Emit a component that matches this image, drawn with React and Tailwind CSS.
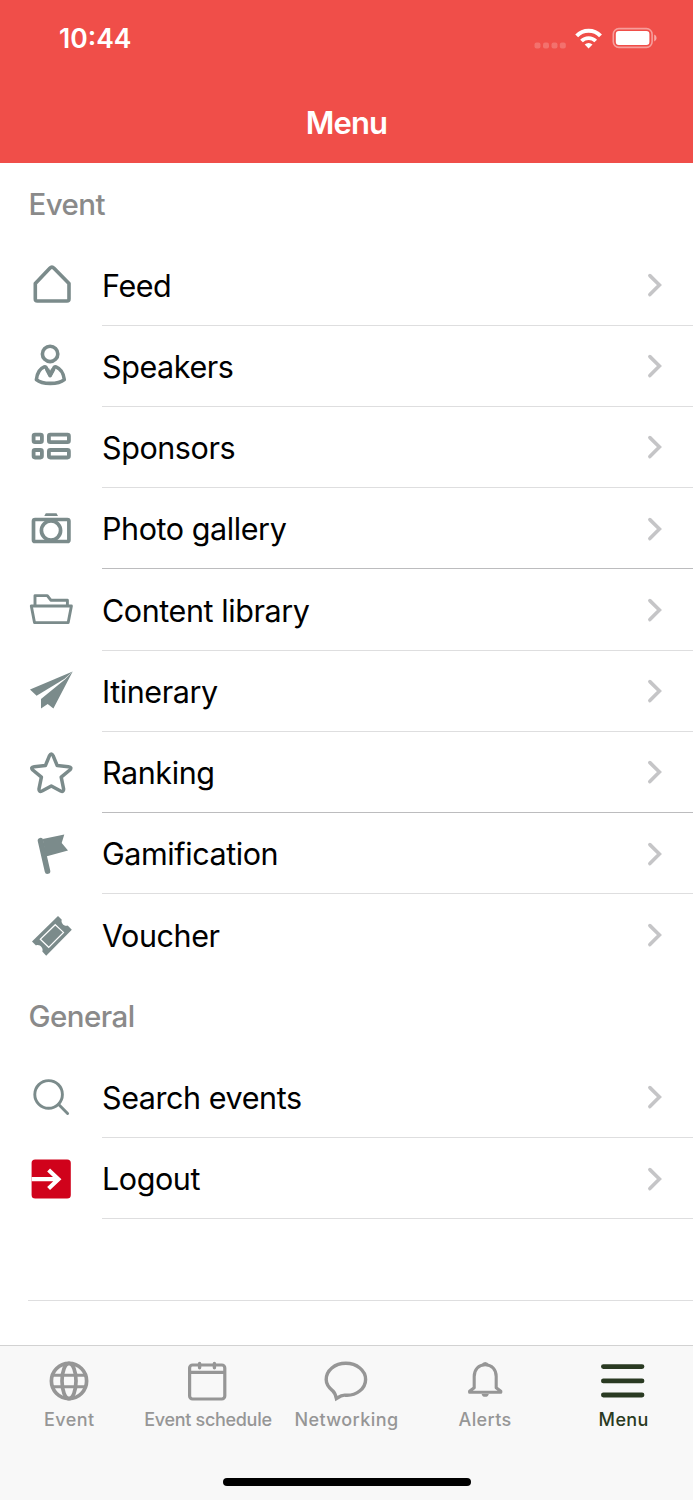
import React, { useState } from "react";

const iconProps = {
  viewBox: "0 0 48 48",
  fill: "none",
  stroke: "currentColor",
  strokeLinejoin: "round",
  className: "h-12 w-12 shrink-0",
};

const HomeIcon = () => (
  <svg {...iconProps} strokeWidth="3.6">
    <path d="M8.3 22.6L22.8 7.2Q24.9 5 27 7.2L42 22.6V38q0 2-2 2H10.3q-2 0-2-2Z" />
  </svg>
);

const SpeakerIcon = () => (
  <svg {...iconProps} strokeWidth="3.6">
    <circle cx="23.1" cy="11.9" r="7.7" />
    <path d="M9.4 37.6C10 31.5 13 26.6 17.2 24.9C18.8 24.6 19.4 25.6 19.9 27.6L23.1 33.6L26.4 27.6C26.8 25.6 27.4 24.6 29 24.9C33.2 26.6 36.6 31.5 37.3 37.6C34 40.4 28 41.4 23.3 41.4S12.6 40.4 9.4 37.6Z" />
    <path d="M20.4 27L23.1 33.2L25.9 27" />
  </svg>
);

const SponsorIcon = () => (
  <svg {...iconProps} strokeWidth="3.8">
    <rect x="6.6" y="11.7" width="8.3" height="7.5" rx="1.4" />
    <rect x="21.9" y="11.7" width="20" height="7.5" rx="1.4" />
    <rect x="6.6" y="27" width="8.3" height="7.5" rx="1.4" />
    <rect x="21.9" y="27" width="20" height="7.5" rx="1.4" />
  </svg>
);

const CameraIcon = () => (
  <svg {...iconProps} strokeWidth="3.7">
    <rect x="6.5" y="14.5" width="35.4" height="22" rx="1.6" />
    <circle cx="24" cy="25.5" r="9.6" />
    <path d="M17.3 10.9L18.8 8.2H29.5L31 10.9Z" fill="currentColor" stroke="none" />
  </svg>
);

const FolderIcon = () => (
  <svg {...iconProps} strokeWidth="2.9">
    <path d="M4.3 20H44.4L41.2 36.6H7.5Z" />
    <path d="M8 20V9.6H20.3L23.8 14.2H40.4V20" />
  </svg>
);

const PlaneIcon = () => (
  <svg {...iconProps} fill="currentColor" stroke="none">
    <path d="M45.7 4.4L3 22.6L9.6 28.8L37.6 11.8Z" />
    <path d="M45.7 4.4L26.4 41.4L20.7 37.1L14 41.4V31.9L38.2 12.2Z" />
  </svg>
);

const StarIcon = () => (
  <svg {...iconProps} strokeWidth="3.5">
    <path d="M18.4 17.6L22.4 7.8Q24.3 4.4 26.2 7.8L30.2 17.6L41.4 18.7Q45.4 19.2 42.8 22L34.2 29.2L36.6 40.8Q36.8 44.4 33.6 43L24.3 38L15 43Q11.8 44.4 12 40.8L14.4 29.2L5.8 22Q3.2 19.2 7.2 18.7Z" />
  </svg>
);

const FlagIcon = () => (
  <svg {...iconProps} fill="currentColor" stroke="none">
    <path d="M13.5 10.7L20.5 41.1" stroke="currentColor" strokeWidth="5.6" strokeLinecap="round" />
    <path d="M15.7 9L37.3 4.6L34.7 13L41 20.6L19 26.6Z" />
  </svg>
);

const VoucherIcon = () => (
  <svg {...iconProps} fill="currentColor" stroke="none">
    <path d="M31 4.9L34.8 8.7C33.4 11.6 37.4 16 40.7 14.6L44.8 18.7L19.2 44.7L15.3 40.6C17 37 12.4 32.6 9 34.4L5 30.5Z" />
    <path d="M28.3 13.7L36.5 21.4L21.7 36.3L13.3 28.3Z" fill="none" stroke="#fff" strokeWidth="1.2" strokeLinejoin="miter" />
  </svg>
);

const SearchIcon = () => (
  <svg {...iconProps} strokeWidth="2.9">
    <circle cx="21.6" cy="21.4" r="13.8" />
    <path d="M31.7 31.4L40.6 40.4" strokeLinecap="round" />
  </svg>
);

const LogoutIcon = () => (
  <svg {...iconProps}>
    <rect x="4.6" y="4.4" width="39.2" height="39.2" rx="3.6" fill="#d0021b" stroke="none" />
    <path d="M4.6 24.2H31.5M21.6 15L31.4 24.2L21.6 33.6" stroke="#fff" strokeWidth="4.2" strokeLinejoin="miter" />
  </svg>
);

const Chevron = () => (
  <svg
    viewBox="0 0 16 26"
    fill="none"
    stroke="#c5c5c7"
    strokeWidth="3.6"
    strokeLinecap="round"
    className="mt-px h-[26px] w-4 shrink-0"
  >
    <path d="M2.9 3.6L12.4 13L2.9 22.6" />
  </svg>
);

const eventItems = [
  { label: "Feed", icon: HomeIcon },
  { label: "Speakers", icon: SpeakerIcon },
  { label: "Sponsors", icon: SponsorIcon },
  { label: "Photo gallery", icon: CameraIcon, dark: true },
  { label: "Content library", icon: FolderIcon },
  { label: "Itinerary", icon: PlaneIcon },
  { label: "Ranking", icon: StarIcon, dark: true },
  { label: "Gamification", icon: FlagIcon },
  { label: "Voucher", icon: VoucherIcon, last: true },
];

const generalItems = [
  { label: "Search events", icon: SearchIcon },
  { label: "Logout", icon: LogoutIcon },
];

const SectionTitle = ({ children }) => (
  <h2 className="flex h-[81.25px] items-center pl-[28.5px] text-[29.5px] font-medium tracking-[-0.55px] text-[#8a8a8a]">
    {children}
  </h2>
);

const MenuRow = ({ item }) => {
  const Icon = item.icon;
  const border = item.last ? "border-transparent" : item.dark ? "border-[#bcbcbe]" : "border-[#dededf]";

  return (
    <li className="flex h-[81.25px] items-center pl-[27px] text-[#7b8b8b]">
      <Icon />
      <div className={`ml-[27px] flex h-full flex-1 items-center justify-between border-b pr-[30px] ${border}`}>
        <span className="pt-0.5 text-[30.5px] tracking-[-0.42px] text-black">{item.label}</span>
        <Chevron />
      </div>
    </li>
  );
};

const tabs = [
  {
    label: "Event",
    icon: (
      <g strokeWidth="3.7">
        <circle cx="24" cy="24" r="17.6" />
        <ellipse cx="24" cy="24" rx="7" ry="17.6" />
        <path d="M8 18.2H40M8 29.8H40" strokeWidth="3.1" />
      </g>
    ),
  },
  {
    label: "Event schedule",
    tracking: "tracking-[-0.3px]",
    icon: (
      <g strokeWidth="3.2">
        <rect x="5.6" y="8" width="35.2" height="34" rx="3" />
        <path d="M5.6 15.3H40.8" />
        <path d="M15.6 6.4V10.8M30.4 6.4V10.8" strokeLinecap="round" strokeWidth="3.4" />
      </g>
    ),
  },
  {
    label: "Networking",
    icon: (
      <path
        strokeWidth="3.4"
        strokeLinejoin="miter"
        d="M14.4 41.5C13.6 38 13 36 10.7 33.8C6.6 30.6 4.2 26.8 4.2 22.6C4.2 13.4 12.8 6.3 23.8 6.3C34.8 6.3 43.6 13.4 43.6 22.4C43.6 31.4 34.4 39 23.4 38.2C19.6 37.8 17.6 39.4 14.4 41.5Z"
      />
    ),
  },
  {
    label: "Alerts",
    icon: (
      <g strokeWidth="3.1">
        <path d="M13.2 30.8V19.5C13.2 12.4 17.6 7.8 24.2 7.8S35.2 12.4 35.2 19.5V30.8L39.8 34.3V35.3H8.6V34.3Z" />
        <path d="M20.7 7.4A3.7 3.7 0 0 1 27.7 7.4ZM20.6 37H27.8A3.7 3.7 0 0 1 20.6 37Z" fill="currentColor" stroke="none" />
      </g>
    ),
  },
  {
    label: "Menu",
    icon: <path d="M3.4 9.6H42M3.4 23.9H42M3.4 38H42" strokeWidth="4.8" strokeLinecap="round" />,
  },
];

const App = () => {
  const [activeTab, setActiveTab] = useState("Menu");

  return (
    <div className="flex h-[1500px] w-[693px] flex-col overflow-hidden bg-white font-['Inter','Liberation_Sans',sans-serif]">
      <header className="h-[163px] shrink-0 bg-[#f04e49] text-white">
        {/* Status bar */}
        <div className="flex h-[77px] items-center justify-between pr-9 pl-[59px]">
          <span className="text-[26.5px] font-semibold">10:44</span>
          <svg viewBox="0 0 124 24" fill="#fff" className="h-6 w-[124px]">
            <g fillOpacity="0.2">
              <rect x="1.5" y="15.5" width="6" height="6" rx="2" />
              <rect x="10" y="15.5" width="6" height="6" rx="2" />
              <rect x="18.5" y="15.5" width="6" height="6" rx="2" />
              <rect x="26.8" y="15.5" width="6" height="6" rx="2" />
            </g>
            <g fill="none" stroke="#fff" strokeWidth="4">
              <path d="M43.7 8.8A16.4 16.4 0 0 1 67.5 8.8" />
              <path d="M48.5 14A10 10 0 0 1 62.7 14" strokeWidth="3.8" />
            </g>
            <path d="M51.7 17.4A5.8 5.8 0 0 1 59.5 17.4L55.6 21.4Z" />
            <rect x="80.3" y="1.6" width="38.8" height="18.8" rx="5.6" fill="none" stroke="#fff" strokeOpacity="0.45" strokeWidth="1.6" />
            <rect x="82.8" y="4.1" width="33.6" height="13.9" rx="3" />
            <path d="M121.2 7.6Q123.6 8.6 123.6 11T121.2 14.4Z" fillOpacity="0.5" />
          </svg>
        </div>
        <h1 className="pt-6 text-center text-[31px] leading-[44px] font-semibold tracking-[-0.9px]">Menu</h1>
      </header>

      <main className="flex-1">
        <SectionTitle>Event</SectionTitle>
        <ul>
          {eventItems.map((item) => (
            <MenuRow key={item.label} item={item} />
          ))}
        </ul>
        <SectionTitle>General</SectionTitle>
        <ul>
          {generalItems.map((item) => (
            <MenuRow key={item.label} item={item} />
          ))}
        </ul>
        <div className="ml-7 h-[81.25px] border-b border-[#dededf]" />
      </main>

      <nav className="flex h-[155px] shrink-0 flex-col items-center border-t border-[#d2d2d2] bg-[#f8f8f8]">
        <div className="grid w-full grid-cols-5 pt-[11px]">
          {tabs.map((tab) => (
            <button
              key={tab.label}
              onClick={() => setActiveTab(tab.label)}
              className={`flex flex-col items-center ${activeTab === tab.label ? "text-[#2a3a22]" : "text-[#969696]"}`}
            >
              <svg {...iconProps}>{tab.icon}</svg>
              <span
                className={`mt-[3px] text-[18px] leading-6 font-medium whitespace-nowrap ${tab.tracking || "tracking-[0.4px]"}`}
              >
                {tab.label}
              </span>
            </button>
          ))}
        </div>
        <div className="mt-auto mb-[14px] h-2 w-[248px] rounded-full bg-black" />
      </nav>
    </div>
  );
};

export default App;
